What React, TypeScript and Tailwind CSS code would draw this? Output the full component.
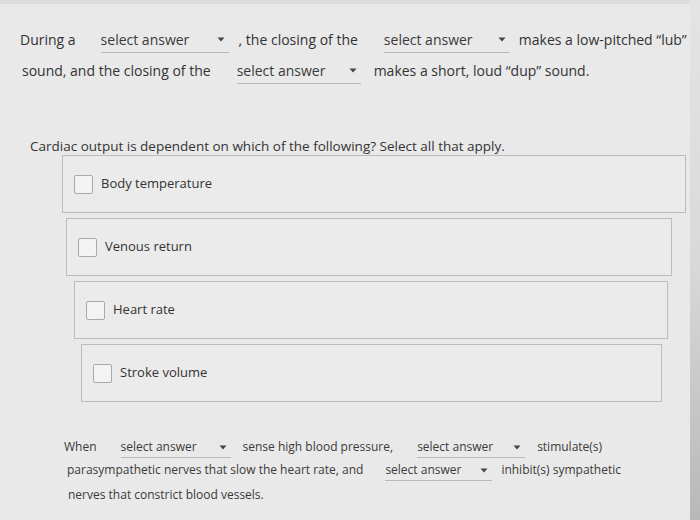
import type { ReactNode } from "react";

const Dropdown = ({ width, small }: { width: string; small?: boolean }) => {
  return (
    <span
      className={`inline-flex items-center justify-between border-b border-[#b9b9b9] ${width} ${
        small ? "text-[12px] pb-[1px]" : "text-[14px] pb-[2px]"
      } text-[#3a3a3a]`}
    >
      <span>select answer</span>
      <svg width="8" height="5" viewBox="0 0 8 5" className="mr-1">
        <path d="M0.5 0.5 L7.5 0.5 L4 4.5 Z" fill="#444" />
      </svg>
    </span>
  );
};

const Choice = ({ label, offset }: { label: string; offset: string }) => {
  return (
    <div
      className={`flex items-center h-[58px] border border-[#bcbcbc] bg-[#ebebeb] ${offset}`}
    >
      <span className="w-[19px] h-[19px] ml-[11px] border border-[#a9a9a9] rounded-[2px] bg-[#f3f3f3]" />
      <span className="ml-[8px] text-[13px] text-[#333]">{label}</span>
    </div>
  );
};

const Line = ({ children, className }: { children: ReactNode; className: string }) => {
  return <div className={`flex items-baseline ${className}`}>{children}</div>;
};

export default function App() {
  return (
    <div
      className="w-[700px] h-[520px] overflow-hidden flex bg-[#e9e9e9] text-[#333]"
      style={{ fontFamily: '"Open Sans", "Noto Sans", sans-serif' }}
    >
      <div className="flex-1 flex flex-col">
        <div className="h-[4px] bg-[#dcdcdc]" />

        {/* heart sounds fill-in */}
        <div className="pl-[20px] pt-[25px] text-[14px]">
          <Line className="h-[26px]">
            <span>During a</span>
            <span className="ml-[25px]">
              <Dropdown width="w-[128px]" />
            </span>
            <span className="ml-[10px]">, the closing of the</span>
            <span className="ml-[26px]">
              <Dropdown width="w-[126px]" />
            </span>
            <span className="ml-[9px]">makes a low-pitched “lub”</span>
          </Line>
          <Line className="h-[26px] mt-[5px]">
            <span className="ml-[2px]">sound, and the closing of the</span>
            <span className="ml-[26px]">
              <Dropdown width="w-[124px]" />
            </span>
            <span className="ml-[13px]">makes a short, loud “dup” sound.</span>
          </Line>
        </div>

        {/* checkbox question */}
        <div className="pl-[30px] pr-[4px] mt-[51px]">
          <div className="text-[13.5px] text-[#333] leading-[18px]">
            Cardiac output is dependent on which of the following? Select all that apply.
          </div>
          <div className="flex flex-col gap-[5px] ml-[32px]">
            <Choice label="Body temperature" offset="" />
            <Choice label="Venous return" offset="ml-[4px] mr-[14px]" />
            <Choice label="Heart rate" offset="ml-[12px] mr-[18px]" />
            <Choice label="Stroke volume" offset="ml-[19px] mr-[24px]" />
          </div>
        </div>

        {/* baroreceptor fill-in */}
        <div className="pl-[64px] mt-[36px] text-[12px] text-[#3a3a3a]">
          <Line className="h-[20px]">
            <span>When</span>
            <span className="ml-[24px]">
              <Dropdown width="w-[110px]" small />
            </span>
            <span className="ml-[12px]">sense high blood pressure,</span>
            <span className="ml-[24px]">
              <Dropdown width="w-[108px]" small />
            </span>
            <span className="ml-[12px]">stimulate(s)</span>
          </Line>
          <Line className="h-[20px] mt-[3px]">
            <span className="ml-[3px]">parasympathetic nerves that slow the heart rate, and</span>
            <span className="ml-[22px]">
              <Dropdown width="w-[107px]" small />
            </span>
            <span className="ml-[9px]">inhibit(s) sympathetic</span>
          </Line>
          <Line className="h-[20px] mt-[5px]">
            <span className="ml-[4px]">nerves that constrict blood vessels.</span>
          </Line>
        </div>
      </div>
      <div className="w-[10px] bg-gradient-to-b from-[#e4e4e4] via-[#d9d9d9] to-[#b8b8b8]" />
    </div>
  );
}
